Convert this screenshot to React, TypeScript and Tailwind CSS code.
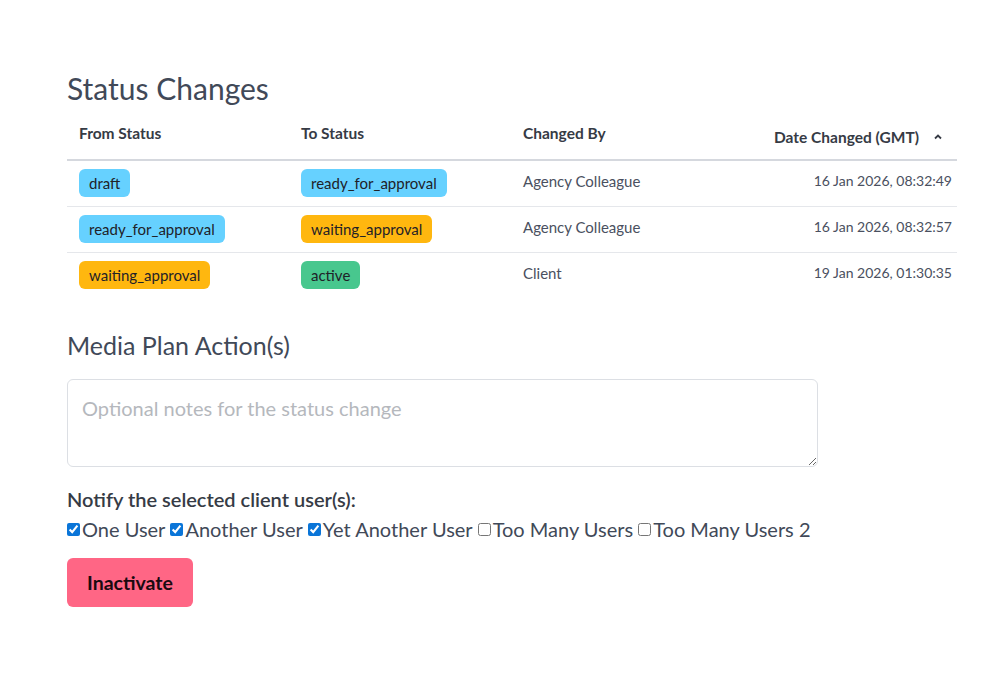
import React from "react";

const font = { fontFamily: "Lato, 'Noto Sans', sans-serif" };

type Tone = "info" | "warning" | "success";
const toneCls: Record<Tone, string> = {
  info: "bg-[#66d1ff]",
  warning: "bg-[#ffb70f]",
  success: "bg-[#48c78e]",
};

function Badge({ text, tone }: { text: string; tone: Tone }) {
  return (
    <span
      className={`inline-flex items-center h-[28px] px-[10px] rounded-[6px] text-[15px] text-[#1f2228] ${toneCls[tone]}`}
    >
      {text}
    </span>
  );
}

const rows: { from: [string, Tone]; to: [string, Tone]; by: string; date: string }[] = [
  { from: ["draft", "info"], to: ["ready_for_approval", "info"], by: "Agency Colleague", date: "16 Jan 2026, 08:32:49" },
  { from: ["ready_for_approval", "info"], to: ["waiting_approval", "warning"], by: "Agency Colleague", date: "16 Jan 2026, 08:32:57" },
  { from: ["waiting_approval", "warning"], to: ["active", "success"], by: "Client", date: "19 Jan 2026, 01:30:35" },
];

const users: [string, boolean][] = [
  ["One User", true],
  ["Another User", true],
  ["Yet Another User", true],
  ["Too Many Users", false],
  ["Too Many Users 2", false],
];

const th = "text-left align-top px-[12px] pt-[3px] pb-[16px] text-[15.5px] leading-[20px] font-bold text-[#363b45]";

export default function App() {
  return (
    <div className="min-h-[700px] bg-white text-[#414958]" style={font}>
      <div className="pl-[67px] pt-[68px] w-[957px]">
        <h1 className="text-[30px] leading-[40px] text-[#414958] mb-[12px]">Status Changes</h1>
        <table className="w-[890px] border-collapse">
          <thead>
            <tr className="border-b-2 border-[#d5d8de]">
              <th className={`w-[222px] ${th}`}>From Status</th>
              <th className={`w-[222px] ${th}`}>To Status</th>
              <th className={`w-[222px] ${th}`}>Changed By</th>
              <th className="text-right align-top px-[12px] pt-[7px] pb-[12px] text-[15.5px] leading-[20px] font-bold text-[#363b45]">
                <span className="inline-flex items-center gap-[14px]">
                  Date Changed (GMT)
                  <svg width="10" height="8" viewBox="0 0 10 8" className="mr-[2px]">
                    <path d="M2 5.5 L5 2.5 L8 5.5" fill="none" stroke="#363b45" strokeWidth="1.8" />
                  </svg>
                </span>
              </th>
            </tr>
          </thead>
          <tbody>
            {rows.map((r, i) => (
              <tr key={i} className={i < rows.length - 1 ? "border-b border-[#e5e7eb]" : ""}>
                <td className="align-top h-[45px] px-[12px] pt-[8px] pb-[9px]"><Badge text={r.from[0]} tone={r.from[1]} /></td>
                <td className="align-top h-[45px] px-[12px] pt-[8px] pb-[9px]"><Badge text={r.to[0]} tone={r.to[1]} /></td>
                <td className="align-top h-[45px] px-[12px] pt-[10px] text-[15px] leading-[20px] text-[#4a5060]">{r.by}</td>
                <td className="align-top h-[45px] text-right pl-[12px] pr-[5px] pt-[10px] text-[14px] leading-[20px] text-[#4a5060]">{r.date}</td>
              </tr>
            ))}
          </tbody>
        </table>

        <h2 className="mt-[30px] text-[25px] leading-[34px] text-[#414958]">Media Plan Action(s)</h2>
        <textarea
          className="mt-[17px] block w-[751px] h-[88px] border border-[#dcdfe4] rounded-[6px] px-[14px] py-[15px] text-[20px] leading-[26px] placeholder:text-[#b5b8bd] outline-none resize-y"
          placeholder="Optional notes for the status change"
        />
        <div className="mt-[20px] text-[20px] font-semibold leading-[24px] text-[#363b45]">Notify the selected client user(s):</div>
        <div className="mt-[6px] flex items-center text-[20px] leading-[24px] text-[#414958]">
          {users.map(([u, c], i) => (
            <label key={i} className="inline-flex items-center mr-[5px]">
              <input type="checkbox" defaultChecked={c} className="w-[13px] h-[13px] m-0 mr-[2px] accent-[#0a75d8]" />
              {u}
            </label>
          ))}
        </div>
        <button className="mt-[17px] w-[126px] h-[49px] rounded-[6px] bg-[#ff6685] text-[19.5px] font-bold text-[#1a0a10]">
          Inactivate
        </button>
      </div>
    </div>
  );
}
